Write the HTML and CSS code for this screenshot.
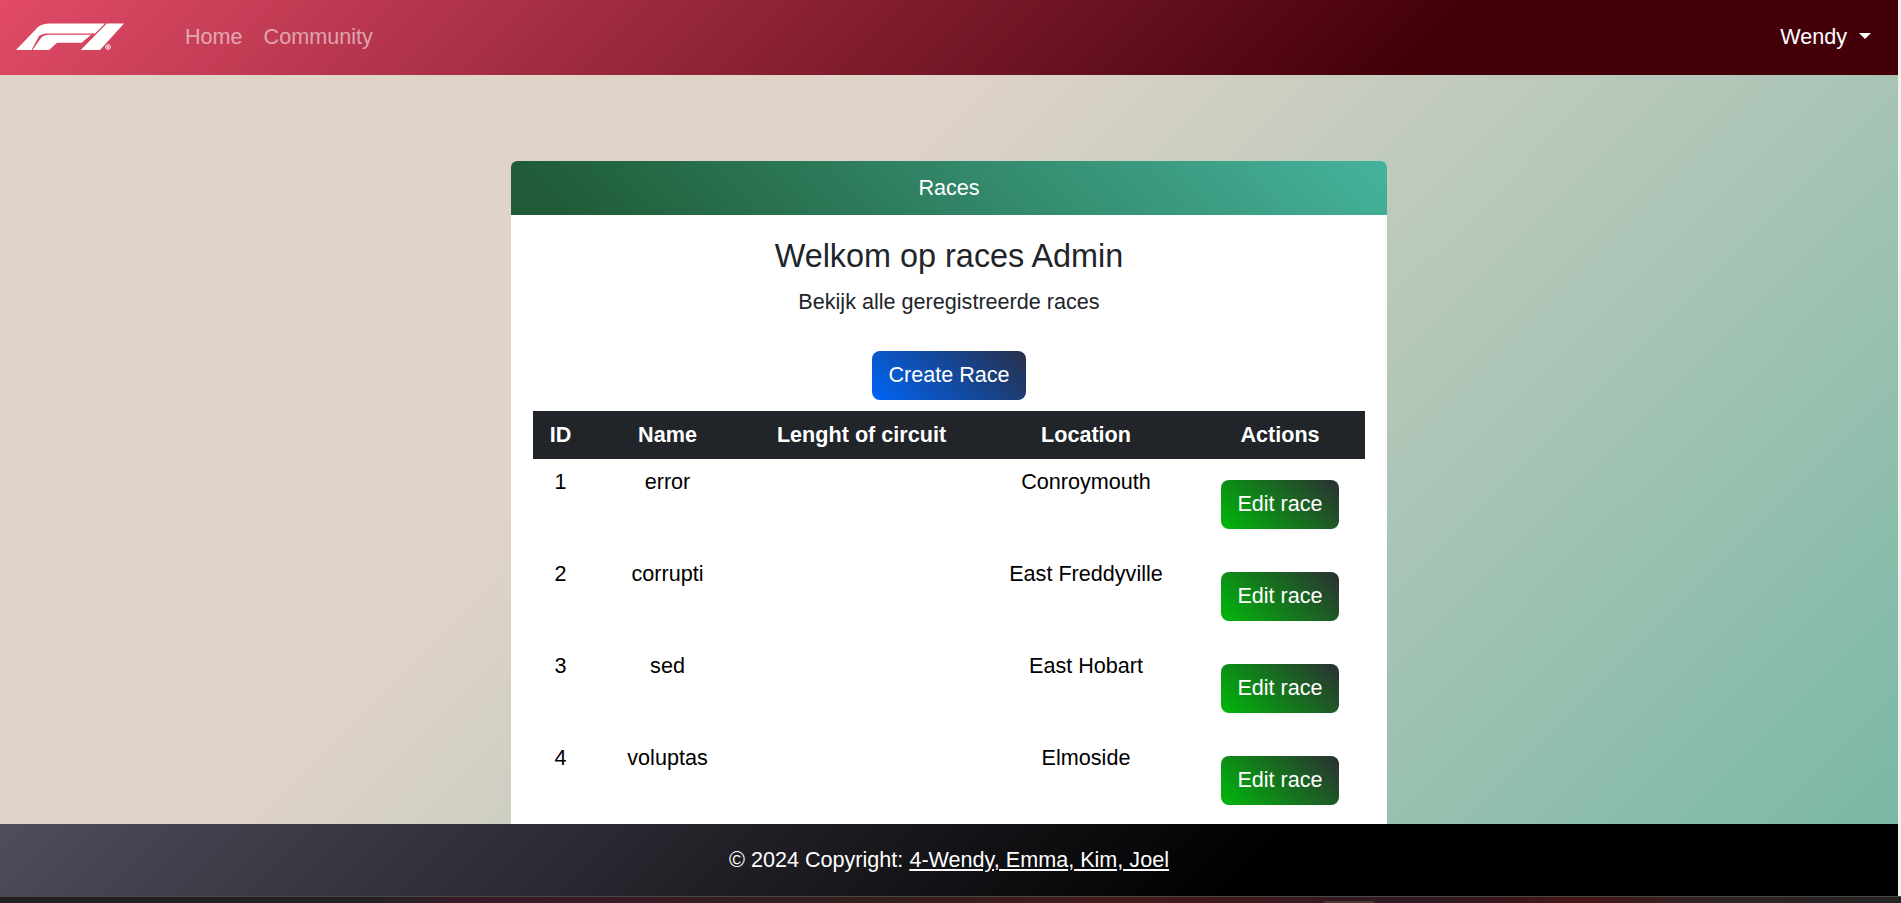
FILE: index.html
```html
<!DOCTYPE html>
<html lang="nl">
<head>
<meta charset="utf-8">
<title>Races</title>
<link rel="stylesheet" href="styles.css">
</head>
<body>
<div class="window">
  <header class="navbar">
    <a class="brand" href="#" aria-label="F1">
      <svg class="logo" viewBox="0 0 108 27" aria-hidden="true">
        <path d="M0 27 L22 4 Q26 .5 34 .5 L89 .5 L79 10.5 L30 10.5 Q26 10.5 23 13 L15.5 27 Z"/>
        <path d="M16.5 27 L25 15 Q28 11.7 33 11.7 L75 11.7 L65.7 19.7 L41 19.7 L33 27 Z"/>
        <path d="M90.7 .5 L108 .5 L84 27 L64.7 27 Z"/>
        <circle class="reg" cx="92" cy="24" r="2.3"/>
        <circle cx="92" cy="24" r=".9"/>
      </svg>
    </a>
    <nav class="nav-links">
      <a href="#">Home</a>
      <a href="#">Community</a>
    </nav>
    <a class="user" href="#">Wendy<span class="caret"></span></a>
  </header>
  <main class="content">
    <section class="card">
      <div class="card-header">Races</div>
      <div class="card-body">
        <h1 class="title">Welkom op races Admin</h1>
        <p class="subtitle">Bekijk alle geregistreerde races</p>
        <div class="create-row"><a class="btn btn-create" href="#">Create Race</a></div>
        <table class="races">
          <colgroup>
            <col class="c-id"><col class="c-name"><col class="c-len"><col class="c-loc"><col class="c-act">
          </colgroup>
          <thead>
            <tr><th>ID</th><th>Name</th><th>Lenght of circuit</th><th>Location</th><th class="th-act">Actions</th></tr>
          </thead>
          <tbody>
            <tr><td>1</td><td>error</td><td></td><td>Conroymouth</td><td><a class="btn btn-edit" href="#">Edit race</a></td></tr>
            <tr><td>2</td><td>corrupti</td><td></td><td>East Freddyville</td><td><a class="btn btn-edit" href="#">Edit race</a></td></tr>
            <tr><td>3</td><td>sed</td><td></td><td>East Hobart</td><td><a class="btn btn-edit" href="#">Edit race</a></td></tr>
            <tr><td>4</td><td>voluptas</td><td></td><td>Elmoside</td><td><a class="btn btn-edit" href="#">Edit race</a></td></tr>
          </tbody>
        </table>
      </div>
    </section>
  </main>
  <footer class="footer">© 2024 Copyright:&nbsp;<a href="#">4-Wendy, Emma, Kim, Joel</a></footer>
</div>
<div class="taskbar"><span class="task-tab"></span></div>
</body>
</html>
```
FILE: styles.css
```css
* { box-sizing: border-box; }
html, body { height: 100%; }
body {
  margin: 0;
  height: 903px;
  overflow: hidden;
  display: flex;
  flex-direction: column;
  font-family: "Liberation Sans", Arial, sans-serif;
  font-size: 21.6px;
  line-height: 32.4px;
  color: #212529;
  background: #f0f0f0;
}
a { color: inherit; text-decoration: none; }

.window {
  height: 896px;
  margin-right: 3px;
  display: flex;
  flex-direction: column;
  overflow: hidden;
}

.navbar {
  flex: none;
  height: 75px;
  display: flex;
  align-items: center;
  padding: 0 27px 0 16px;
  background: linear-gradient(135deg, #e24b67 0%, #440009 74%);
}
.brand { display: flex; }
.logo { width: 108px; height: 27px; display: block; fill: #fff; margin-bottom: 2px; }
.logo .reg { fill: none; stroke: #fff; stroke-width: 1; }
.nav-links { display: flex; gap: 21px; margin-left: 61px; color: rgba(255, 255, 255, .55); }
.user { margin-left: auto; color: #fff; display: flex; align-items: center; }
.caret {
  margin-left: 12px;
  margin-top: -3px;
  border-top: 6px solid #fff;
  border-left: 6px solid transparent;
  border-right: 6px solid transparent;
}

.content {
  flex: 1;
  min-height: 0;
  overflow: hidden;
  display: flex;
  justify-content: center;
  padding-top: 86px;
  background: linear-gradient(135deg, #e0d3c8 36%, #7ab8a5 100%);
}

.card {
  width: 876px;
  height: max-content;
  background: #fff;
  border-radius: 6px;
  flex: none;
}
.card-header {
  height: 54px;
  display: flex;
  align-items: center;
  justify-content: center;
  color: #fff;
  border-radius: 6px 6px 0 0;
  background: linear-gradient(45deg, #1f5b36 5%, #45b39c 100%);
}
.card-body { padding: 21px 22px 24px; }
.title {
  margin: 0;
  font-weight: 400;
  font-size: 32.4px;
  line-height: 40px;
  text-align: center;
}
.subtitle { margin: 10px 0 0; text-align: center; }
.create-row { display: flex; justify-content: center; margin-top: 33px; }

.btn {
  display: block;
  height: 49px;
  border-radius: 8px;
  color: #fff;
  text-align: center;
  line-height: 48px;
}
.btn-create {
  width: 154px;
  background: linear-gradient(45deg, #0065f5 0%, #272f49 100%);
}
.btn-edit {
  width: 118px;
  margin: 14px 26px 15px 25px;
  background: linear-gradient(45deg, #00b80a 0%, #2b2e33 100%);
}

.races {
  width: 832px;
  margin-top: 11px;
  border-collapse: collapse;
  table-layout: fixed;
  text-align: center;
  color: #000;
}
.c-id { width: 55px; }
.c-name { width: 159px; }
.c-len { width: 229px; }
.c-loc { width: 220px; }
.c-act { width: 169px; }
.races th {
  height: 48px;
  padding: 0;
  background: #212529;
  color: #fff;
  font-weight: 700;
}
.races .th-act { padding-right: 1px; }
.races td { padding: 7px 0; vertical-align: top; }

.footer {
  flex: none;
  height: 72px;
  display: flex;
  align-items: center;
  justify-content: center;
  color: #fff;
  background: linear-gradient(135deg, #504c5c 0%, #000 66%);
}
.footer a { text-decoration: underline; }

.taskbar {
  position: relative;
  flex: none;
  height: 7px;
  border-top: 1px solid #4a4744;
  background: linear-gradient(90deg, #222 0%, #252223 20%, #3a1a2a 25%, #32201e 45%, #451a1a 60%, #2d1a22 75%, #451615 83%, #2f2426 90%, #242424 100%);
}
.task-tab {
  position: absolute;
  left: 1324px;
  bottom: 0;
  width: 51px;
  height: 2px;
  background: #4a3a36;
  border-radius: 2px 2px 0 0;
}
```
